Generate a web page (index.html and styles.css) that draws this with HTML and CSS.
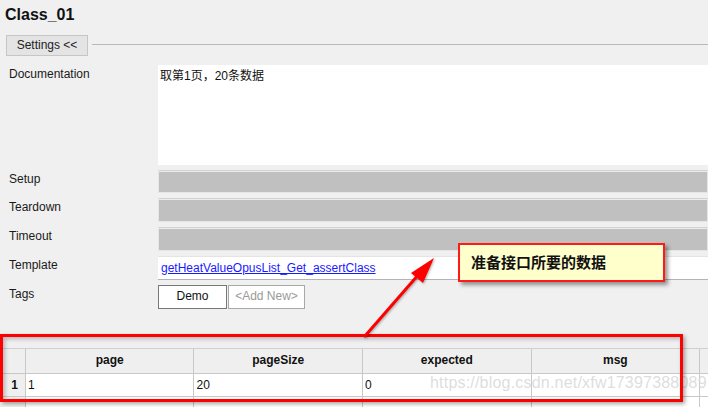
FILE: index.html
```html
<!DOCTYPE html>
<html>
<head>
<meta charset="utf-8">
<link rel="stylesheet" href="styles.css">
</head>
<body>
<div class="page">
  <div class="title">Class_01</div>
  <div class="settings-bar">
    <div class="settings-btn">Settings &lt;&lt;</div>
    <div class="settings-line"></div>
  </div>
  <div class="form">
    <div class="label">Documentation</div>
    <div class="doc">取第1页，20条数据</div>
    <div class="label">Setup</div>
    <div class="field-gray"></div>
    <div class="label">Teardown</div>
    <div class="field-gray"></div>
    <div class="label">Timeout</div>
    <div class="field-gray"></div>
    <div class="label">Template</div>
    <div class="field-white"><span class="link">getHeatValueOpusList_Get_assertClass</span></div>
    <div class="label">Tags</div>
    <div class="tags">
      <div class="tag">Demo</div>
      <div class="tag-new">&lt;Add New&gt;</div>
    </div>
  </div>
  <div class="table-area">
    <div class="trow thead">
      <div class="cell num"></div>
      <div class="cell col">page</div>
      <div class="cell col">pageSize</div>
      <div class="cell col">expected</div>
      <div class="cell col">msg</div>
      <div class="cell col"></div>
    </div>
    <div class="trow tbody">
      <div class="cell num">1</div>
      <div class="cell col">1</div>
      <div class="cell col">20</div>
      <div class="cell col">0</div>
      <div class="cell col"></div>
      <div class="cell col"></div>
    </div>
    <div class="trow tbody">
      <div class="cell num"></div>
      <div class="cell col"></div>
      <div class="cell col"></div>
      <div class="cell col"></div>
      <div class="cell col"></div>
      <div class="cell col"></div>
    </div>
  </div>

  <div class="watermark">https://blog.csdn.net/xfw17397388089</div>
  <div class="red-box"></div>
  <div class="callout">准备接口所要的数据</div>
  <svg class="arrow" width="708" height="407" viewBox="0 0 708 407">
    <line x1="365" y1="336" x2="419" y2="274" stroke="#ff0000" stroke-width="3" stroke-linecap="round"/>
    <polygon points="434,258 411,273 423,283" fill="#ff0000"/>
  </svg>
</div>
</body>
</html>
```
FILE: styles.css
```css
html, body {
  margin: 0;
  padding: 0;
}
body {
  background: #f0f0f0;
  font-family: "Liberation Sans", Arial, sans-serif;
  font-size: 12px;
  color: #111;
  overflow: hidden;
}
.page {
  position: relative;
  width: 708px;
  height: 407px;
  overflow: hidden;
}
.title {
  height: 35px;
  box-sizing: border-box;
  padding: 5px 0 0 5px;
  font-size: 16px;
  font-weight: bold;
  line-height: 19px;
  color: #111;
}
.settings-bar {
  display: flex;
  align-items: center;
  height: 21px;
  padding-left: 6px;
}
.settings-btn {
  width: 82px;
  height: 21px;
  box-sizing: border-box;
  border: 1px solid #c6c6c6;
  background: #e4e4e4;
  text-align: center;
  line-height: 19px;
  color: #222;
}
.settings-line {
  flex: 1;
  margin-left: 4px;
  height: 1px;
  background: #b9b9b9;
  margin-top: -2px;
}
.form {
  display: grid;
  grid-template-columns: 158px 1fr;
  grid-template-rows: 100px 23px 24px 24px 24px 24px;
  row-gap: 5px;
  margin-top: 9px;
}
.label {
  padding: 2px 0 0 9px;
  color: #1a1a1a;
  line-height: 14px;
}
.doc {
  background: #fff;
  padding: 3px 0 0 2px;
  font-family: "Liberation Sans", "Noto Sans CJK SC", sans-serif;
  font-size: 12px;
  line-height: 16px;
  color: #111;
}
.field-gray {
  background: #c0c0c0;
  border: 1px solid #e6e6e6;
  border-top-color: #d2d2d2;
  box-shadow: inset 0 1px 0 #ececec;
}
.field-white {
  background: #fff;
  border-top: 1px solid #e4e4e4;
  border-bottom: 1px solid #b4b4b4;
  padding: 4px 0 0 3px;
  line-height: 14px;
}
.link {
  color: #1a1aff;
  text-decoration: underline;
}
.tags {
  display: flex;
}
.tag {
  width: 69px;
  box-sizing: border-box;
  border: 1px solid #777;
  background: #fff;
  text-align: center;
  line-height: 20px;
  color: #111;
}
.tag-new {
  width: 77px;
  box-sizing: border-box;
  border: 1px solid #a8a8a8;
  background: #fff;
  text-align: center;
  line-height: 20px;
  color: #9a9a9a;
  margin-left: 1px;
}
.table-area {
  margin-top: 39px;
  width: 740px;
}
.trow {
  display: flex;
  border-bottom: 1px solid #c8c8c8;
}
.thead {
  height: 24px;
  background: #efefef;
  border-top: 1px solid #d0d0d0;
}
.tbody {
  height: 22px;
  background: #fff;
}
.cell {
  box-sizing: border-box;
  border-right: 1px solid #c8c8c8;
  line-height: 22px;
}
.num {
  width: 26px;
  background: #efefef;
  text-align: center;
  font-weight: bold;
  padding-left: 4px;
}
.col {
  width: 169px;
  padding-left: 2px;
}
.col:last-child {
  width: 40px;
}
.thead .col {
  text-align: center;
  font-weight: bold;
  padding-left: 0;
}
.watermark {
  position: absolute;
  left: 430px;
  top: 374px;
  font-family: "Liberation Sans", Arial, sans-serif;
  font-size: 16px;
  color: rgba(215, 215, 215, 0.85);
  letter-spacing: 0.2px;
}
.red-box {
  position: absolute;
  left: 0;
  top: 334px;
  width: 683px;
  height: 68px;
  box-sizing: border-box;
  border: 3px solid #ff0000;
  box-shadow: 2px 2px 4px rgba(0, 0, 0, 0.35), inset 2px 2px 4px rgba(0, 0, 0, 0.25);
}
.callout {
  position: absolute;
  left: 458px;
  top: 243px;
  width: 207px;
  height: 39px;
  box-sizing: border-box;
  border: 2px solid #ff1a1a;
  background: #ffffcc;
  box-shadow: 3px 3px 4px rgba(0, 0, 0, 0.4);
  padding-left: 11px;
  font-family: "Noto Sans CJK SC", sans-serif;
  font-weight: bold;
  font-size: 15px;
  line-height: 34px;
  color: #111;
}
.arrow {
  position: absolute;
  left: 0;
  top: 0;
  filter: drop-shadow(1px 1px 1px rgba(0, 0, 0, 0.3));
}
```
